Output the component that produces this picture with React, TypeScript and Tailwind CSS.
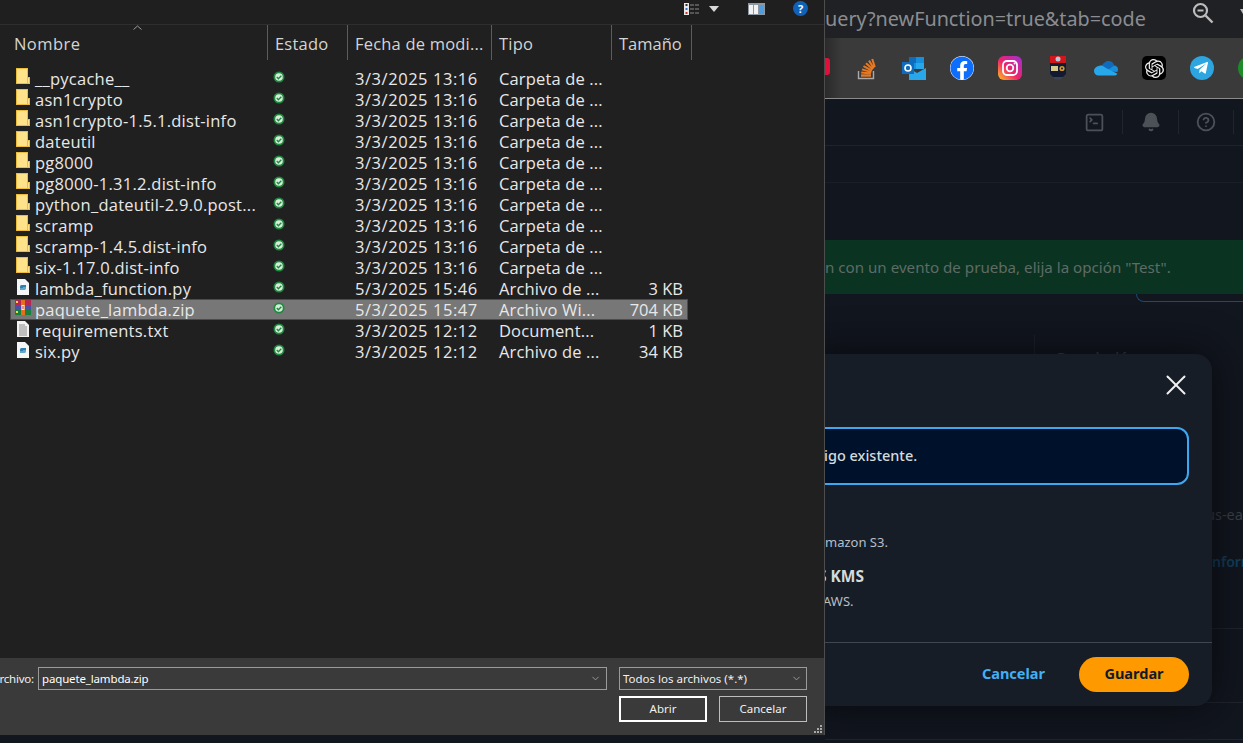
import React from "react";
import { Bell, ChevronDown, CircleHelp, SquareTerminal, X } from "lucide-react";
import { FaFacebook, FaTelegramPlane } from "react-icons/fa";
import { SiOpenai } from "react-icons/si";

const files = [
  { name: "__pycache__", kind: "folder", date: "3/3/2025 13:16", type: "Carpeta de ...", size: "" },
  { name: "asn1crypto", kind: "folder", date: "3/3/2025 13:16", type: "Carpeta de ...", size: "" },
  { name: "asn1crypto-1.5.1.dist-info", kind: "folder", date: "3/3/2025 13:16", type: "Carpeta de ...", size: "" },
  { name: "dateutil", kind: "folder", date: "3/3/2025 13:16", type: "Carpeta de ...", size: "" },
  { name: "pg8000", kind: "folder", date: "3/3/2025 13:16", type: "Carpeta de ...", size: "" },
  { name: "pg8000-1.31.2.dist-info", kind: "folder", date: "3/3/2025 13:16", type: "Carpeta de ...", size: "" },
  { name: "python_dateutil-2.9.0.post...", kind: "folder", date: "3/3/2025 13:16", type: "Carpeta de ...", size: "" },
  { name: "scramp", kind: "folder", date: "3/3/2025 13:16", type: "Carpeta de ...", size: "" },
  { name: "scramp-1.4.5.dist-info", kind: "folder", date: "3/3/2025 13:16", type: "Carpeta de ...", size: "" },
  { name: "six-1.17.0.dist-info", kind: "folder", date: "3/3/2025 13:16", type: "Carpeta de ...", size: "" },
  { name: "lambda_function.py", kind: "py", date: "5/3/2025 15:46", type: "Archivo de ...", size: "3 KB" },
  { name: "paquete_lambda.zip", kind: "zip", date: "5/3/2025 15:47", type: "Archivo Wi...", size: "704 KB" },
  { name: "requirements.txt", kind: "txt", date: "3/3/2025 12:12", type: "Document...", size: "1 KB" },
  { name: "six.py", kind: "py", date: "3/3/2025 12:12", type: "Archivo de ...", size: "34 KB" },
];

function FileIcon({ kind }: { kind: string }) {
  if (kind === "folder") {
    return (
      <svg width="14" height="17" viewBox="0 0 14 17">
        <rect x="11" y="9.5" width="2.5" height="6" fill="#ffe28a" stroke="#eebb3c" strokeWidth="1" />
        <rect x="0.5" y="0.5" width="11" height="15" fill="#ffe28a" stroke="#eebb3c" strokeWidth="1" />
      </svg>
    );
  }
  if (kind === "zip") {
    return (
      <svg width="16" height="15" viewBox="0 0 16 15">
        <rect x="0" y="0" width="16" height="5" fill="#b5284f" />
        <rect x="0" y="5" width="16" height="5" fill="#4b4fa8" />
        <rect x="0" y="10" width="16" height="5" fill="#17803c" />
        <rect x="1" y="1" width="2" height="2" fill="#f3d54e" />
        <rect x="1" y="11" width="2" height="2" fill="#f3d54e" />
        <rect x="6" y="0" width="4" height="15" fill="#e2701e" />
        <rect x="6.5" y="5" width="3" height="5" fill="#f4f4f4" />
        <rect x="7.5" y="6" width="1" height="3" fill="#c33" />
      </svg>
    );
  }
  if (kind === "txt") {
    return (
      <svg width="12" height="16" viewBox="0 0 12 16">
        <path d="M0 0h8l4 4v12H0z" fill="#f2f2f2" />
        <path d="M2 4h6M2 6h8M2 8h8M2 10h8M2 12h8M2 14h8" stroke="#8a8a8a" strokeWidth="1" />
      </svg>
    );
  }
  return (
    <svg width="12" height="16" viewBox="0 0 12 16">
      <path d="M0 0h8l4 4v12H0z" fill="#f4f6f8" />
      <path d="M3 8c0-2 1-2 3-2h3v2H6v1H3z" fill="#2f7fb0" />
      <path d="M9 8v1c0 2-1 2-3 2H3V9h3V8z" fill="#63a6c8" />
    </svg>
  );
}

function StatusIcon() {
  return (
    <svg width="12" height="12" viewBox="0 0 12 12">
      <circle cx="6" cy="6" r="5.5" fill="#1f8a3f" />
      <circle cx="6" cy="6" r="3.8" fill="#d7ecd9" />
      <path d="M3.8 6.1l1.6 1.6 2.9-3" fill="none" stroke="#1f8a3f" strokeWidth="1.4" />
    </svg>
  );
}

function FileRow({ file }: { file: (typeof files)[number] }) {
  const selected = file.kind === "zip";
  return (
    <div
      className={
        selected
          ? "grid grid-cols-[257px_80px_144px_120px_77px] h-[21px] items-center bg-[#777777] outline outline-1 -outline-offset-1 outline-[#4c4c4c]"
          : "grid grid-cols-[257px_80px_144px_120px_77px] h-[21px] items-center"
      }
    >
      <div className="flex items-center min-w-0">
        <div className="w-[25px] flex justify-center shrink-0 -mt-[4px]">
          <FileIcon kind={file.kind} />
        </div>
        <span className="whitespace-nowrap tracking-[0.25px]">{file.name}</span>
      </div>
      <div className="pl-[6px] flex -mt-[4px]">
        <StatusIcon />
      </div>
      <div className="pl-[8px] whitespace-nowrap tracking-[0.55px]">{file.date}</div>
      <div className="pl-[8px] whitespace-nowrap tracking-[0.15px]">{file.type}</div>
      <div className="pr-[5px] text-right whitespace-nowrap">{file.size}</div>
    </div>
  );
}

function FileDialog() {
  return (
    <div className="w-[825px] h-[735px] shrink-0 flex flex-col bg-[#202020] border-r border-[#4d4d4d] font-['Open_Sans',sans-serif] text-[#e8e8e8]">
      {/* title strip with view buttons */}
      <div className="h-[25px] shrink-0 flex items-center justify-end gap-[9px] pr-[16px] pb-[7px] border-b border-[#2e2e2e] bg-[#1f1f1f]">
        <svg width="16" height="12" viewBox="0 0 16 12">
          <rect x="0" y="0" width="5" height="12" fill="#e8e8e8" />
          <rect x="1.5" y="1" width="2" height="2" fill="#333" />
          <rect x="1.5" y="5" width="2" height="2" fill="#2b79c9" />
          <rect x="1.5" y="9" width="2" height="2" fill="#c33" />
          <path d="M6 2h4M11 2h4M6 6h4M11 6h4M6 10h4M11 10h4" stroke="#8c8c8c" strokeWidth="1" />
        </svg>
        <svg width="10" height="6" viewBox="0 0 10 6">
          <path d="M0 0h10L5 6z" fill="#d8d8d8" />
        </svg>
        <svg className="ml-[20px]" width="17" height="12" viewBox="0 0 17 12">
          <rect width="17" height="12" fill="#8d98a3" />
          <rect x="1" y="2" width="4" height="9" fill="#f2f2f2" />
          <rect x="6" y="2" width="4" height="9" fill="#f2f2f2" />
          <rect x="11" y="2" width="5" height="9" fill="#4f9fe0" />
        </svg>
        <div className="ml-[19px] w-[15px] h-[15px] rounded-full bg-[#0f62b8] flex items-center justify-center text-white text-[11px] leading-none font-bold">
          ?
        </div>
      </div>

      {/* column headers */}
      <div className="relative h-[35px] shrink-0 grid grid-cols-[268px_80px_144px_120px_80px] w-[692px] text-[16.5px] tracking-[0.2px] text-[#d4d4d4]">
        <div className="pl-[14px] pt-[7px] border-r border-[#5c5c5c] tracking-[0.45px]">Nombre</div>
        <div className="pl-[7px] pt-[7px] border-r border-[#5c5c5c]">Estado</div>
        <div className="pl-[7px] pt-[7px] border-r border-[#5c5c5c] whitespace-nowrap">Fecha de modi...</div>
        <div className="pl-[7px] pt-[7px] border-r border-[#5c5c5c]">Tipo</div>
        <div className="pl-[7px] pt-[7px] border-r border-[#5c5c5c] tracking-normal">Tamaño</div>
        <svg className="absolute left-[133px] top-[0px]" width="9" height="5" viewBox="0 0 9 5">
          <path d="M0.5 4.5L4.5 1l4 3.5" fill="none" stroke="#9a9a9a" strokeWidth="1" />
        </svg>
      </div>

      {/* file list */}
      <div className="flex-1 pt-[8px] pl-[10px] w-[678px] box-content text-[16.5px] leading-[21px]">
        {files.map((f) => (
          <FileRow key={f.name} file={f} />
        ))}
      </div>

      {/* bottom panel */}
      <div className="relative h-[77px] shrink-0 bg-[#3a3a3a] pt-[9px] font-['Noto_Sans',sans-serif] text-[11.5px] text-[#f0f0f0] overflow-hidden">
        <div className="flex items-center h-[23px]">
          <span className="w-[34px] text-right whitespace-nowrap flex justify-end shrink-0 tracking-[-0.2px]">rchivo:</span>
          <div className="ml-[4px] w-[569px] h-[23px] border border-[#9a9a9a] flex items-center pl-[3px] justify-between pr-[5px] text-white">
            <span className="tracking-[-0.15px]">paquete_lambda.zip</span>
            <ChevronDown size={11} color="#a0a0a0" />
          </div>
          <div className="ml-[12px] w-[188px] h-[23px] border border-[#9a9a9a] flex items-center pl-[3px] justify-between pr-[4px]">
            <span>Todos los archivos (*.*)</span>
            <ChevronDown size={11} color="#a0a0a0" />
          </div>
        </div>
        <div className="flex justify-end gap-[12px] mt-[6px] pr-[17px]">
          <button className="w-[88px] h-[26px] border-2 border-white text-center">Abrir</button>
          <button className="w-[88px] h-[26px] border border-[#bdbdbd] text-center">Cancelar</button>
        </div>
        <svg className="absolute right-[2px] bottom-[2px]" width="8" height="8" viewBox="0 0 8 8">
          <path d="M6 0h2v2H6zM3 3h2v2H3zM6 3h2v2H6zM0 6h2v2H0zM3 6h2v2H3zM6 6h2v2H6z" fill="#a8a8a8" />
        </svg>
      </div>
    </div>
  );
}

function BookmarkBar() {
  return (
    <div className="h-[61px] shrink-0 flex items-center gap-[24px] pl-[29px] bg-[#3a3a3a] border-b border-[#8a8a8a] bg-gradient-to-r from-[#2a2a2a] to-[#3a3a3a] to-[4%] overflow-hidden relative">
      <div className="absolute left-[0px] top-[20px] w-[5px] h-[17px] bg-[#e0103a] rounded-r-[3px]" />
      <svg className="shrink-0" width="24" height="24" viewBox="0 0 24 24">
        <path d="M4.5 15v7.5h15V15" fill="none" stroke="#a9a9a9" strokeWidth="1.4" />
        <path d="M7 19.5h10" stroke="#e87922" strokeWidth="2.4" />
        <path d="M7.2 16.6l9.7 1M8 13.4l9.4 2.7M9.5 10.2l8.4 4.4M12 7.2l6.9 6M15 4.6l4.8 7.6M18.2 3l2.6 8" stroke="#e87922" strokeWidth="2" fill="none" />
      </svg>
      <svg className="shrink-0" width="24" height="24" viewBox="0 0 24 24">
        <path d="M7 1h15v12H7z" fill="#1490df" />
        <path d="M7 1h7v6H7z" fill="#0f6cbd" />
        <path d="M14 7h8v6h-8z" fill="#28a8ea" />
        <path d="M7 12l8 5 9-5v12H7z" fill="#28a8ea" />
        <rect x="0" y="6" width="12" height="12" fill="#0f6cbd" />
        <circle cx="6" cy="12" r="3" fill="none" stroke="#fff" strokeWidth="1.6" />
      </svg>
      <FaFacebook size={24} color="#0d6efd" className="bg-white rounded-full shrink-0" />
      <svg className="shrink-0" width="24" height="24" viewBox="0 0 24 24">
        <defs>
          <linearGradient id="ig" x1="0" y1="1" x2="1" y2="0">
            <stop offset="0" stopColor="#fdc31f" />
            <stop offset="0.45" stopColor="#f0226a" />
            <stop offset="1" stopColor="#a02fd8" />
          </linearGradient>
        </defs>
        <rect width="24" height="24" rx="6" fill="url(#ig)" />
        <rect x="5" y="5" width="14" height="14" rx="4" fill="none" stroke="#fff" strokeWidth="1.8" />
        <circle cx="12" cy="12" r="3.3" fill="none" stroke="#fff" strokeWidth="1.8" />
        <circle cx="16.6" cy="7.4" r="1" fill="#fff" />
      </svg>
      <svg className="shrink-0" width="24" height="24" viewBox="0 0 24 24">
        <rect x="4" y="0" width="16" height="7" fill="#d2161c" />
        <circle cx="12" cy="3" r="2.5" fill="#b8c8d8" />
        <path d="M4 7h16v11l-3 3H7l-3-3z" fill="#111a30" />
        <rect x="5" y="10" width="7" height="5" fill="#d8c98a" />
        <circle cx="16" cy="12.5" r="2.6" fill="#d89a2a" />
        <circle cx="16" cy="12.5" r="1" fill="#111a30" />
        <path d="M7 21h10l-2 2.5H9z" fill="#3a4450" />
      </svg>
      <svg className="shrink-0" width="24" height="24" viewBox="0 0 24 24">
        <path d="M8 9.5C9.5 6.5 12 5 14.5 5c3 0 5 2 5.7 4.5L12 15 7 12.5z" fill="#0f6cbd" />
        <path d="M20 9.5c2.500 0 4 1.800 4 3.800 0 1-.3 2-.8 2.700L12 15z" fill="#1490df" />
        <path d="M8 9.500c-4.500 0-8 2.200-8 5.500 0 2.500 2 4.500 4.500 4.500h16c1.300 0 2.300-.7 2.900-1.800L12 12z" fill="#28a8ea" />
      </svg>
      <div className="w-[24px] h-[24px] rounded-[5px] bg-black flex items-center justify-center shrink-0">
        <SiOpenai size={19} color="#f0f0f0" />
      </div>
      <div className="w-[24px] h-[24px] rounded-full bg-[#2ca5e0] flex items-center justify-center shrink-0">
        <FaTelegramPlane size={16} color="#ffffff" className="-ml-[2px]" />
      </div>
      <div className="w-[24px] h-[24px] rounded-full bg-[#1e8a28] shrink-0" />
    </div>
  );
}

function ConsolePage() {
  return (
    <div className="flex-1 relative bg-[#12161f] overflow-hidden font-['Noto_Sans',sans-serif]">
      {/* console toolbar */}
      <div className="h-[47px] flex items-center justify-end border-b border-[#1d2430] text-[#4c5158] pr-[9px]">
        <div className="w-[56px] flex justify-center border-r border-[#20262f] h-[24px] items-center">
          <SquareTerminal size={21} strokeWidth={2} />
        </div>
        <div className="w-[56px] flex justify-center border-r border-[#20262f] h-[24px] items-center">
          <Bell size={20} strokeWidth={2.4} fill="#4c5158" />
        </div>
        <div className="w-[55px] flex justify-center border-r border-[#20262f] h-[24px] items-center">
          <CircleHelp size={20} strokeWidth={2.2} />
        </div>
      </div>
      <div className="h-[37px] border-b border-[#191e27]" />
      <div className="h-[57px]" />

      {/* success banner */}
      <div className="h-[54px] bg-[#0b3321] flex items-center text-[15.15px] text-[#5e6b66] whitespace-nowrap">
        n con un evento de prueba, elija la opción "Test".
      </div>
      <div className="ml-[311px] h-[8px] rounded-bl-[14px] border-l border-b border-[#1e4a6e]" />

      {/* page behind the modal */}
      <div className="absolute left-[209px] top-[236px] h-[30px] border-l border-[#1d222b]" />
      <div className="absolute left-[232px] top-[248px] text-[14px] font-semibold text-[#3f4650]">Descripción</div>
      <div className="absolute left-[381px] top-[405px] text-[14.5px] text-[#3d4249] whitespace-nowrap">us-ea</div>
      <div className="absolute left-[387px] top-[452px] text-[14px] font-semibold text-[#12405f] whitespace-nowrap">nform</div>
      <div className="absolute left-[387px] right-0 top-[529px] h-px bg-[#20252e]" />
      <div className="absolute left-0 right-0 top-[603px] h-px bg-[#20252e]" />
      <div className="absolute left-0 right-0 top-[640px] h-px bg-[#20252e]" />

      {/* modal */}
      <div className="absolute left-[-20px] top-[255px] w-[407px] h-[352px] flex flex-col rounded-[16px] bg-[#171d26] shadow-[0_0_40px_#07090d] text-[#d5dbdb]">
        <div className="h-[73px] flex justify-end pt-[14px] pr-[19px]">
          <X size={34} strokeWidth={1.4} color="#f0f0f0" />
        </div>
        <div className="mr-[23px] h-[58px] flex items-center pl-[17px] rounded-[12px] border-2 border-[#3fa7f0] bg-[#00112b] text-[14.5px] font-medium">
          igo existente.
        </div>
        <div className="pl-[20px] mt-[48px] text-[13px] leading-[18px] text-[#b6bec9]">mazon S3.</div>
        <div className="pl-[13px] mt-[15px] text-[15.5px] leading-[20px] font-bold">S KMS</div>
        <div className="pl-[18px] mt-[6px] text-[13px] leading-[18px] text-[#b6bec9]">AWS.</div>
        <div className="mt-auto h-[64px] border-t border-[#414750] flex items-center justify-end gap-[34px] pr-[23px] pb-[1px]">
          <span className="text-[14.5px] font-bold text-[#42b0f5]">Cancelar</span>
          <button className="w-[110px] h-[35px] rounded-full bg-[#ff9900] text-[14.5px] font-bold text-[#0f1b2a]">
            Guardar
          </button>
        </div>
      </div>
    </div>
  );
}

export default function App() {
  return (
    <div className="w-[1243px] h-[743px] flex overflow-hidden bg-[#12161f]">
      <div className="relative z-10 shrink-0 w-[825px]">
        <FileDialog />
      </div>
      <div className="w-[418px] shrink-0 flex flex-col">
        <div className="h-[38px] shrink-0 bg-[#202124] flex items-center font-['Noto_Sans',sans-serif] text-[19.8px] text-[#8b8d91] whitespace-nowrap relative">
          uery?newFunction=true&amp;tab=code
          <svg className="absolute left-[367px] top-[2px]" width="22" height="22" viewBox="0 0 22 22">
            <circle cx="8.500" cy="8.500" r="6.500" fill="none" stroke="#bdbdbd" strokeWidth="2.200" />
            <path d="M5.500 8.500h6" stroke="#bdbdbd" strokeWidth="2" />
            <path d="M13.500 13.500l7 7" stroke="#bdbdbd" strokeWidth="2.400" />
          </svg>
          <svg className="absolute left-[415px] top-[9px]" width="6" height="5" viewBox="0 0 6 5">
            <path d="M0 0h6L3 5z" fill="#bdbdbd" />
          </svg>
        </div>
        <BookmarkBar />
        <ConsolePage />
      </div>
    </div>
  );
}
